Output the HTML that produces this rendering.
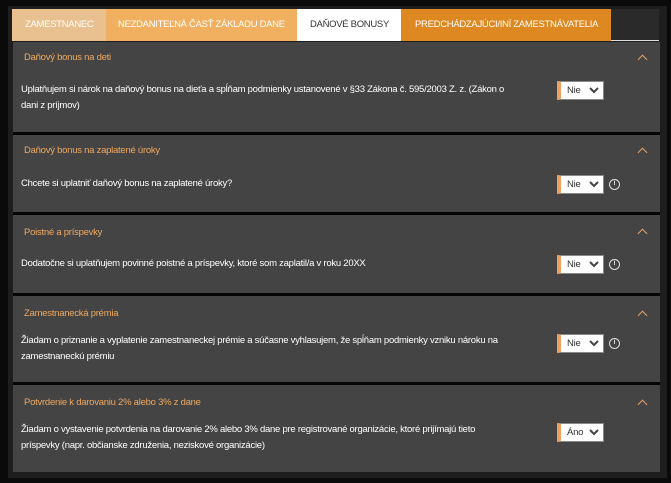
<!DOCTYPE html>
<html><head><meta charset="utf-8"><style>
*{margin:0;padding:0;box-sizing:border-box}
body{width:671px;height:483px;background:#0a0a0a;font-family:"Liberation Sans",sans-serif;font-size:9.5px;position:relative;overflow:hidden;letter-spacing:-0.25px}
.frame{position:absolute;left:8px;top:6px;width:659px;height:472px;background:#1e1e1e}
.tabs{position:absolute;left:12px;top:9px;height:32px;width:647px;background:#2a2a2a}
.tabs:after{content:"";position:absolute;left:599px;width:48px;bottom:0;height:1px;background:#ddd}
.tab{position:absolute;top:0;height:32px;line-height:32px;font-size:9.5px;color:#fff;white-space:nowrap;overflow:hidden;letter-spacing:-0.3px}
.panel{position:absolute;left:13px;top:42px;width:647px;height:430px;background:#444}
.sec{position:absolute;left:0;width:647px;background:#444;border-top:3px solid #050505}
.h{position:absolute;left:11px;color:#f0a860}
.c{position:absolute;left:8px;color:#fff;width:525px;line-height:16px}
.chev{position:absolute;left:626px;width:7px;height:7px;border-left:1.3px solid #e8a060;border-top:1.3px solid #e8a060;transform:rotate(45deg)}
.sel{position:absolute;left:544px;width:47px;height:19px;background:#fff;border:1px solid #888;border-left:4px solid #eea060;color:#333;padding-left:6px;line-height:17px}
.sel svg{position:absolute;right:4px;top:5px}
.info{position:absolute;left:596px;width:11px;height:11px;border:1.3px solid #ddd;border-radius:50%;color:#ddd;font-size:7px;font-weight:bold;text-align:center;line-height:8px;letter-spacing:0}
</style></head><body>
<div class="frame"></div>
<div class="tabs">
<div class="tab" style="left:0;width:94px;background:#e9c08f;padding-left:13px">ZAMESTNANEC</div>
<div class="tab" style="left:94px;width:191px;background:#f0b060;padding-left:12px">NEZDANITEĽNÁ ČASŤ ZÁKLADU DANE</div>
<div class="tab" style="left:285px;width:104px;background:#fff;color:#333;padding-left:13px">DAŇOVÉ BONUSY</div>
<div class="tab" style="left:389px;width:210px;background:#dd8820;padding-left:14px">PREDCHÁDZAJÚCI/INÍ ZAMESTNÁVATELIA</div>
</div>
<div class="panel">
<div class="sec" style="top:0;height:90px;border-top:none">
<div class="h" style="top:10px">Daňový bonus na deti</div><div class="chev" style="top:14px"></div>
<div class="c" style="top:40px;width:495px">Uplatňujem si nárok na daňový bonus na dieťa a spĺňam podmienky ustanovené v §33 Zákona č. 595/2003 Z. z. (Zákon o dani z príjmov)</div>
<div class="sel" style="top:39px">Nie<svg width="10" height="7"><path d="M1 1l4 4 4-4" stroke="#444" stroke-width="2" fill="none"/></svg></div>
</div>
<div class="sec" style="top:90px;height:80px">
<div class="h" style="top:10px">Daňový bonus na zaplatené úroky</div><div class="chev" style="top:14px"></div>
<div class="c" style="top:41px">Chcete si uplatniť daňový bonus na zaplatené úroky?</div>
<div class="sel" style="top:40px">Nie<svg width="10" height="7"><path d="M1 1l4 4 4-4" stroke="#444" stroke-width="2" fill="none"/></svg></div>
<div class="info" style="top:44px">i</div>
</div>
<div class="sec" style="top:170px;height:81px">
<div class="h" style="top:12px">Poistné a príspevky</div><div class="chev" style="top:15px"></div>
<div class="c" style="top:41px">Dodatočne si uplatňujem povinné poistné a príspevky, ktoré som zaplatil/a v roku 20XX</div>
<div class="sel" style="top:40px">Nie<svg width="10" height="7"><path d="M1 1l4 4 4-4" stroke="#444" stroke-width="2" fill="none"/></svg></div>
<div class="info" style="top:44px">i</div>
</div>
<div class="sec" style="top:251px;height:90px">
<div class="h" style="top:12px">Zamestnanecká prémia</div><div class="chev" style="top:16px"></div>
<div class="c" style="top:37px">Žiadam o priznanie a vyplatenie zamestnaneckej prémie a súčasne vyhlasujem, že spĺňam podmienky vzniku nároku na zamestnaneckú prémiu</div>
<div class="sel" style="top:38px">Nie<svg width="10" height="7"><path d="M1 1l4 4 4-4" stroke="#444" stroke-width="2" fill="none"/></svg></div>
<div class="info" style="top:42px">i</div>
</div>
<div class="sec" style="top:340px;height:90px">
<div class="h" style="top:12px">Potvrdenie k darovaniu 2% alebo 3% z dane</div><div class="chev" style="top:16px"></div>
<div class="c" style="top:37px;width:490px">Žiadam o vystavenie potvrdenia na darovanie 2% alebo 3% dane pre registrované organizácie, ktoré prijímajú tieto príspevky (napr. občianske združenia, neziskové organizácie)</div>
<div class="sel" style="top:38px">Áno<svg width="10" height="7"><path d="M1 1l4 4 4-4" stroke="#444" stroke-width="2" fill="none"/></svg></div>
</div>
</div>
</body></html>
